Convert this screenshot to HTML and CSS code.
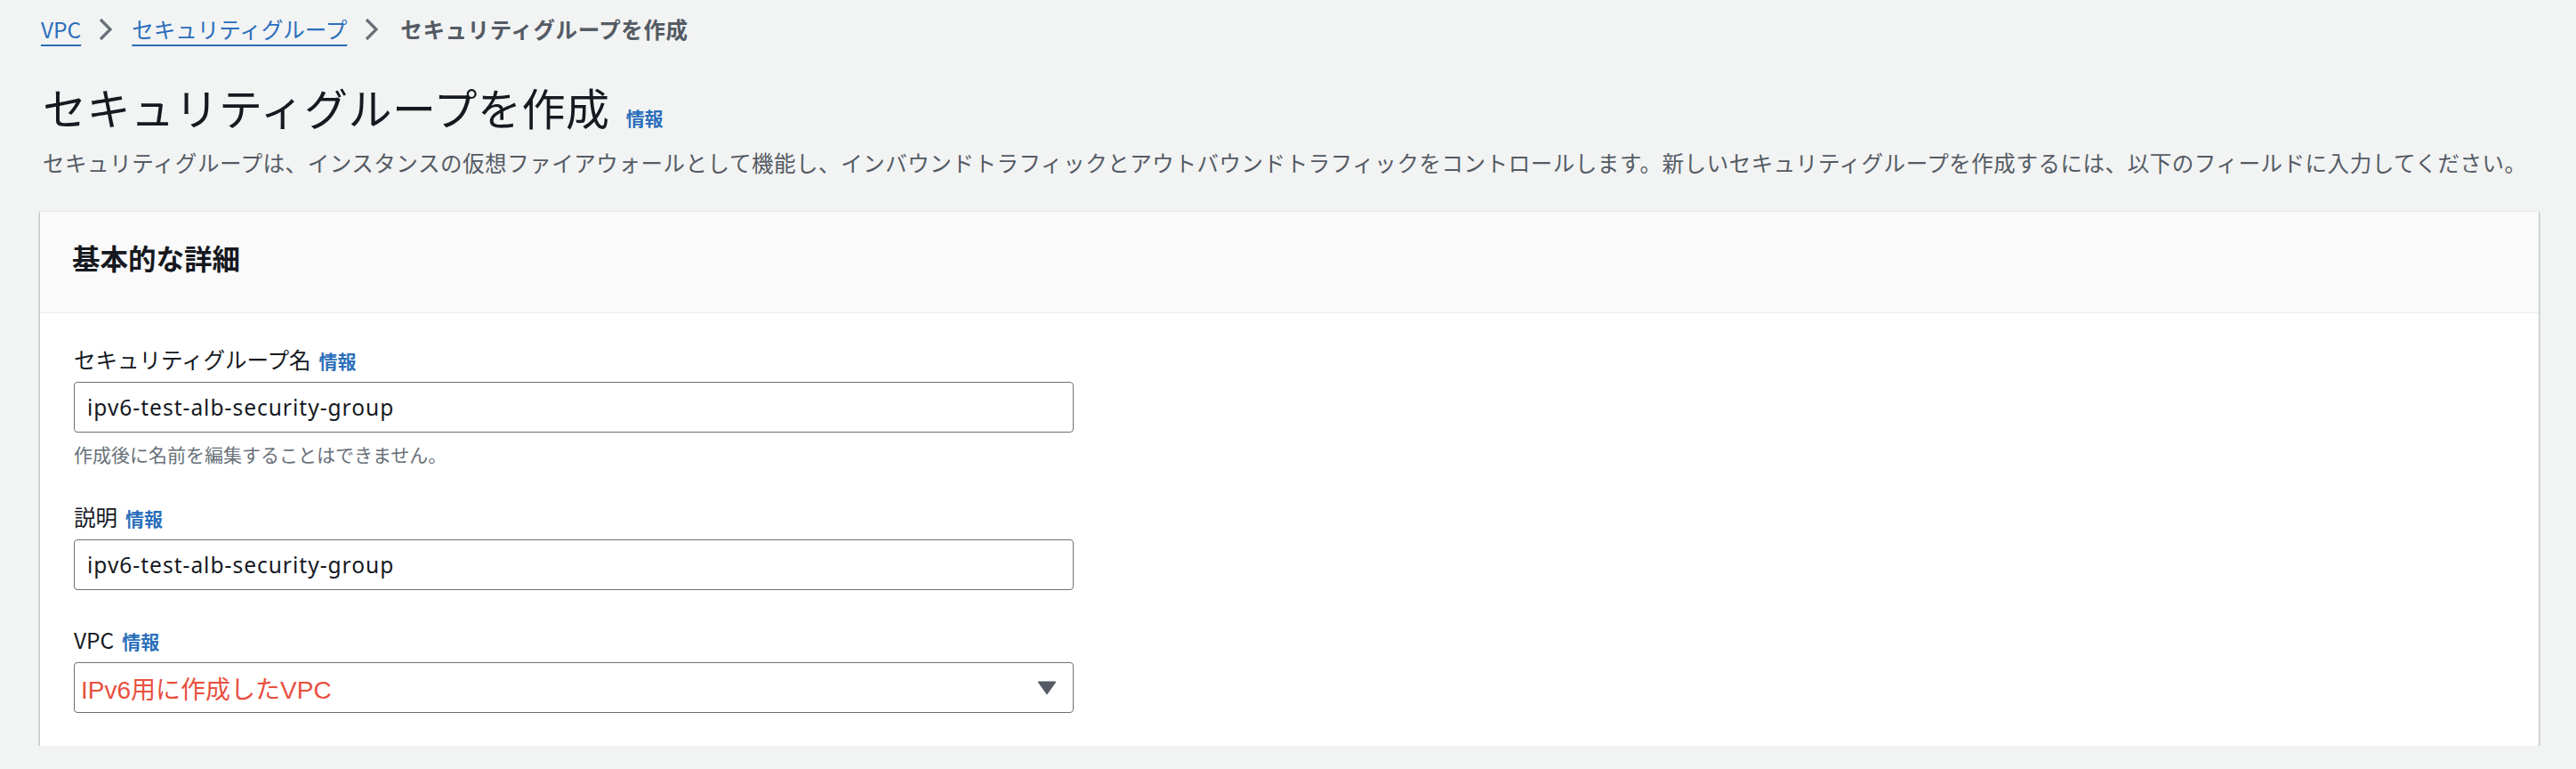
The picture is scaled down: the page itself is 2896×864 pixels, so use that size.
FILE: index.html
```html
<!DOCTYPE html>
<html lang="ja">
<head>
<meta charset="utf-8">
<title>セキュリティグループを作成</title>
<link rel="stylesheet" href="styles.css">
</head>
<body>
<div class="page">
  <nav class="breadcrumbs">
    <a class="crumb-link" href="#">VPC</a>
    <svg class="chev" viewBox="0 0 16 26" width="16" height="26"><polyline points="2,2 13,13 2,24" fill="none" stroke="#687078" stroke-width="3.2"/></svg>
    <a class="crumb-link" href="#">セキュリティグループ</a>
    <svg class="chev" viewBox="0 0 16 26" width="16" height="26"><polyline points="2,2 13,13 2,24" fill="none" stroke="#687078" stroke-width="3.2"/></svg>
    <span class="crumb-current">セキュリティグループを作成</span>
  </nav>

  <h1 class="title">セキュリティグループを作成<a class="info info-title" href="#">情報</a></h1>
  <p class="desc">セキュリティグループは、インスタンスの仮想ファイアウォールとして機能し、インバウンドトラフィックとアウトバウンドトラフィックをコントロールします。新しいセキュリティグループを作成するには、以下のフィールドに入力してください。</p>

  <section class="card">
    <header class="card-header"><h2 class="card-title">基本的な詳細</h2></header>
    <div class="card-body">
      <div class="field">
        <div class="label">セキュリティグループ名<a class="info" href="#">情報</a></div>
        <div class="input"><span class="input-text">ipv6-test-alb-security-group</span></div>
        <div class="hint">作成後に名前を編集することはできません。</div>
      </div>
      <div class="field">
        <div class="label">説明<a class="info" href="#">情報</a></div>
        <div class="input"><span class="input-text">ipv6-test-alb-security-group</span></div>
      </div>
      <div class="field">
        <div class="label">VPC<a class="info" href="#">情報</a></div>
        <div class="input select">
          <span class="select-text">IPv6用に作成したVPC</span>
          <svg class="caret" viewBox="0 0 20 16" width="20" height="16"><polygon points="0,1 20,1 10,15" fill="#545b64" stroke="#545b64" stroke-width="1" stroke-linejoin="round"/></svg>
        </div>
      </div>
    </div>
  </section>
</div>
</body>
</html>
```

FILE: styles.css
```css
html, body {
  margin: 0;
  padding: 0;
  background: #f2f3f3;
}
body {
  font-family: "Noto Sans CJK JP", sans-serif;
  color: #16191f;
}
.page {
  padding: 14px 42px 0 45px;
}
.breadcrumbs {
  display: flex;
  align-items: center;
  height: 38px;
  font-size: 24.5px;
  line-height: 38px;
}
.crumb-link {
  color: #2a6ebb;
  text-decoration: underline;
  text-decoration-thickness: 2px;
  text-underline-offset: 7px;
  margin-left: 1px;
}
.chev {
  margin: 0 20px;
}
.crumb-current {
  color: #545b64;
  font-weight: 700;
  margin-left: 4px;
  letter-spacing: 0.6px;
}
.title {
  margin: 33px 0 0 3px;
  font-size: 49px;
  line-height: 70px;
  font-weight: 400;
  letter-spacing: 0.5px;
}
.info {
  color: #2a6ebb;
  font-size: 21px;
  line-height: 1;
  font-weight: 700;
  text-decoration: none;
  margin-left: 9px;
  letter-spacing: 0;
}
.info-title {
  margin-left: 18px;
}
.desc {
  margin: 10px 0 0 3px;
  font-size: 24.5px;
  line-height: 36px;
  color: #545b64;
  white-space: nowrap;
  letter-spacing: 0.55px;
}
.card {
  margin-top: 36px;
  background: #fff;
  border-top: 1px solid #eaeded;
  box-shadow: 0 2px 2px 0 rgba(0, 28, 36, 0.35), 1px 1px 2px 0 rgba(0, 28, 36, 0.15), -1px 1px 2px 0 rgba(0, 28, 36, 0.15);
}
.card-header {
  background: #fafafa;
  border-bottom: 1px solid #eaeded;
  padding: 32px 36px 43px;
}
.card-title {
  margin: 0;
  font-size: 31.5px;
  line-height: 38px;
  font-weight: 700;
}
.card-body {
  padding: 34px 36px 37px 38px;
  display: flex;
  flex-direction: column;
  gap: 38px;
}
.field {
  display: flex;
  flex-direction: column;
}
.label {
  font-size: 24.5px;
  line-height: 35px;
  margin-bottom: 8px;
}
.input {
  box-sizing: border-box;
  width: 1124px;
  height: 57px;
  border: 1.5px solid #687078;
  border-radius: 4px;
  background: #fff;
  display: flex;
  align-items: center;
  padding: 0 14px;
}
.input-text {
  font-family: "Noto Sans", sans-serif;
  font-size: 24.5px;
  letter-spacing: 1px;
  color: #16191f;
}
.hint {
  margin-top: 9px;
  font-size: 21px;
  line-height: 30px;
  color: #687078;
}
.select {
  padding: 0 19px 0 7px;
  justify-content: space-between;
}
.select-text {
  font-family: "Liberation Sans", "Noto Sans CJK JP", sans-serif;
  font-size: 28px;
  color: #e8503f;
}
.caret {
  display: block;
}
```
